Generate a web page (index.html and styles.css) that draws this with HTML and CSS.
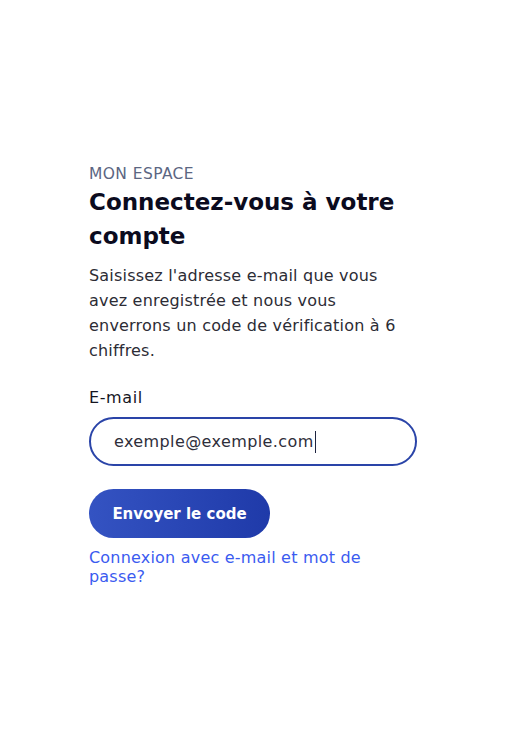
FILE: index.html
```html
<!DOCTYPE html>
<html lang="fr">
<head>
<meta charset="utf-8">
<title>Mon espace</title>
<link rel="stylesheet" href="styles.css">
</head>
<body>
<main class="page">
  <section class="card">
    <p class="eyebrow">MON ESPACE</p>
    <h1 class="title">Connectez-vous à votre compte</h1>
    <p class="intro">Saisissez l'adresse e-mail que vous avez enregistrée et nous vous enverrons un code de vérification à 6 chiffres.</p>
    <form class="form">
      <label class="label">E-mail</label>
      <div class="input"><span class="value">exemple@exemple.com</span><span class="caret"></span></div>
      <div class="actions"><button type="button" class="btn">Envoyer le code</button></div>
      <a class="link" href="#">Connexion avec e-mail et mot de passe?</a>
    </form>
  </section>
</main>
</body>
</html>
```
FILE: styles.css
```css
* { box-sizing: border-box; }
html, body { margin: 0; padding: 0; background: #fff; }
body { font-family: "DejaVu Sans", "Open Sans", sans-serif; }
.page { display: flex; justify-content: center; padding-top: 163px; }
.card { width: 328px; display: flex; flex-direction: column; }
.eyebrow { margin: 0; font-size: 15.5px; line-height: 22px; color: #5b6682; letter-spacing: 0.4px; }
.title { margin: 0; font-size: 23px; line-height: 34px; font-weight: 700; color: #0b0b1e; }
.intro { margin: 10px 0 0; font-size: 16px; line-height: 25px; color: #2c2c35; letter-spacing: 0.2px; }
.form { display: flex; flex-direction: column; margin-top: 24px; }
.label { font-size: 16px; line-height: 22px; color: #15151f; letter-spacing: 0.6px; }
.input { margin-top: 8px; height: 49px; border: 2px solid #2a44a8; border-radius: 25px; display: flex; align-items: center; padding-left: 23px; font-size: 16px; color: #2e2e3a; letter-spacing: 0.4px; }
.caret { display: inline-block; width: 1px; height: 22px; background: #1d2440; margin-left: 1px; }
.actions { margin-top: 23px; display: flex; }
.btn { height: 49px; width: 181px; border: 0; border-radius: 25px; background: linear-gradient(90deg, #3453c2, #1f3aa9); color: #fff; font-family: inherit; font-size: 15px; font-weight: 700; }
.link { margin-top: 10px; font-size: 16px; line-height: 19px; color: #3b5bf0; text-decoration: none; letter-spacing: 0.2px; }
```
